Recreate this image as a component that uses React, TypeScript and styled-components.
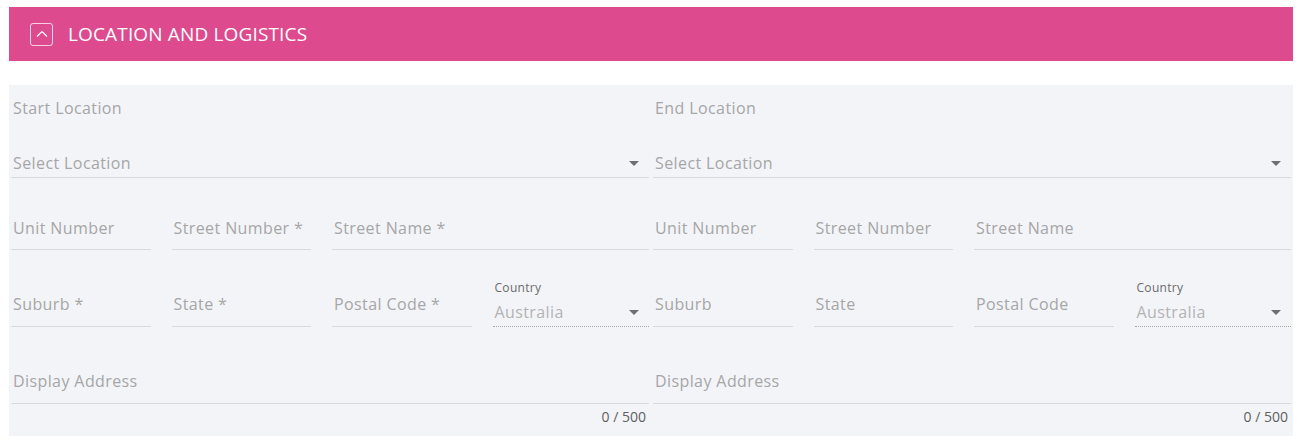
import React from 'react';
import styled, { createGlobalStyle } from 'styled-components';

const GlobalStyle = createGlobalStyle`
  html, body {
    margin: 0;
    padding: 0;
    background: #ffffff;
    font-family: "Open Sans", "Noto Sans", sans-serif;
  }
  * {
    box-sizing: border-box;
  }
`;

const Page = styled.div`
  padding: 7px 15px 0 9px;
`;

const Header = styled.header`
  height: 54px;
  background: #dd4a8e;
  display: flex;
  align-items: center;
  padding-left: 21px;
  gap: 15px;
  color: #ffffff;
`;

const ToggleBox = styled.span`
  width: 23px;
  height: 23px;
  border: 1px solid rgba(255, 255, 255, 0.75);
  border-radius: 3px;
  display: flex;
  align-items: center;
  justify-content: center;
`;

const Title = styled.h2`
  margin: 0;
  font-size: 19px;
  font-weight: 400;
  letter-spacing: 0.15px;
  text-transform: uppercase;
`;

const Body = styled.section`
  margin-top: 24px;
  background: #f3f4f8;
  padding: 11px 2px 10px;
  display: grid;
  grid-template-columns: 1fr 1fr;
  column-gap: 4px;
`;

const Column = styled.div`
  display: flex;
  flex-direction: column;
`;

const SectionLabel = styled.div`
  height: 24px;
  line-height: 24px;
  font-size: 16px;
  letter-spacing: 0.4px;
  color: #a6a6a6;
  padding-left: 2px;
`;

const Row = styled.div<{ $h: number }>`
  display: flex;
  height: ${p => p.$h}px;
`;

// columns step about 160.5px; the last cell of a row takes what is left
const Cell = styled.div<{ $last?: boolean }>`
  flex: ${p => (p.$last ? '1 1 0' : '0 0 calc(25% + 1px)')};
  padding-right: ${p => (p.$last ? 0 : 21)}px;
  display: flex;
`;

const Field = styled.div<{ $pb: number; $dotted?: boolean }>`
  flex: 1;
  display: flex;
  flex-direction: column;
  justify-content: flex-end;
  padding: 0 0 ${p => p.$pb}px 2px;
  border-bottom: 1px ${p => (p.$dotted ? 'dotted' : 'solid')} ${p => (p.$dotted ? '#a8a8a8' : '#d9dadd')};
`;

const Placeholder = styled.div<{ $muted?: boolean }>`
  height: 24px;
  line-height: 24px;
  font-size: 16px;
  letter-spacing: 0.4px;
  color: ${p => (p.$muted ? '#b3b3b3' : '#a6a6a6')};
  white-space: nowrap;
`;

const SmallLabel = styled.div`
  height: 16px;
  line-height: 16px;
  font-size: 12px;
  letter-spacing: 0.3px;
  color: #6b6b6b;
  margin-bottom: 4px;
`;

const SelectLine = styled.div`
  display: flex;
  align-items: center;
  justify-content: space-between;
  padding-right: 10px;
`;

const Caret = styled.span`
  width: 0;
  height: 0;
  border-left: 5px solid transparent;
  border-right: 5px solid transparent;
  border-top: 5px solid #6f6f6f;
`;

const Counter = styled.div`
  margin-top: 4px;
  height: 18px;
  line-height: 18px;
  font-size: 14px;
  color: #5f5f5f;
  text-align: right;
  padding-right: 3px;
`;

interface SideProps {
  title: string;
  required: boolean;
}

const star = (on: boolean) => (on ? ' *' : '');

const Side: React.FC<SideProps> = ({ title, required }) => (
  <Column>
    <SectionLabel>{title}</SectionLabel>
    <Row $h={58}>
      <Cell $last>
        <Field $pb={2}>
          <SelectLine>
            <Placeholder>Select Location</Placeholder>
            <Caret />
          </SelectLine>
        </Field>
      </Cell>
    </Row>
    <Row $h={72}>
      <Cell>
        <Field $pb={9}>
          <Placeholder>Unit Number</Placeholder>
        </Field>
      </Cell>
      <Cell>
        <Field $pb={9}>
          <Placeholder>Street Number{star(required)}</Placeholder>
        </Field>
      </Cell>
      <Cell $last>
        <Field $pb={9}>
          <Placeholder>Street Name{star(required)}</Placeholder>
        </Field>
      </Cell>
    </Row>
    <Row $h={77}>
      <Cell>
        <Field $pb={10}>
          <Placeholder>Suburb{star(required)}</Placeholder>
        </Field>
      </Cell>
      <Cell>
        <Field $pb={10}>
          <Placeholder>State{star(required)}</Placeholder>
        </Field>
      </Cell>
      <Cell>
        <Field $pb={10}>
          <Placeholder>Postal Code{star(required)}</Placeholder>
        </Field>
      </Cell>
      <Cell $last>
        <Field $pb={2} $dotted>
          <SmallLabel>Country</SmallLabel>
          <SelectLine>
            <Placeholder $muted>Australia</Placeholder>
            <Caret />
          </SelectLine>
        </Field>
      </Cell>
    </Row>
    <Row $h={77}>
      <Cell $last>
        <Field $pb={10}>
          <Placeholder>Display Address</Placeholder>
        </Field>
      </Cell>
    </Row>
    <Counter>0 / 500</Counter>
  </Column>
);

const App: React.FC = () => (
  <>
    <GlobalStyle />
    <Page>
      <Header>
        <ToggleBox>
          <svg width="12" height="8" viewBox="0 0 12 8" fill="none">
            <path d="M1 6.5 L6 1.5 L11 6.5" stroke="#ffffff" strokeWidth="1.2" />
          </svg>
        </ToggleBox>
        <Title>Location and Logistics</Title>
      </Header>
      <Body>
        <Side title="Start Location" required />
        <Side title="End Location" required={false} />
      </Body>
    </Page>
  </>
);

export default App;
